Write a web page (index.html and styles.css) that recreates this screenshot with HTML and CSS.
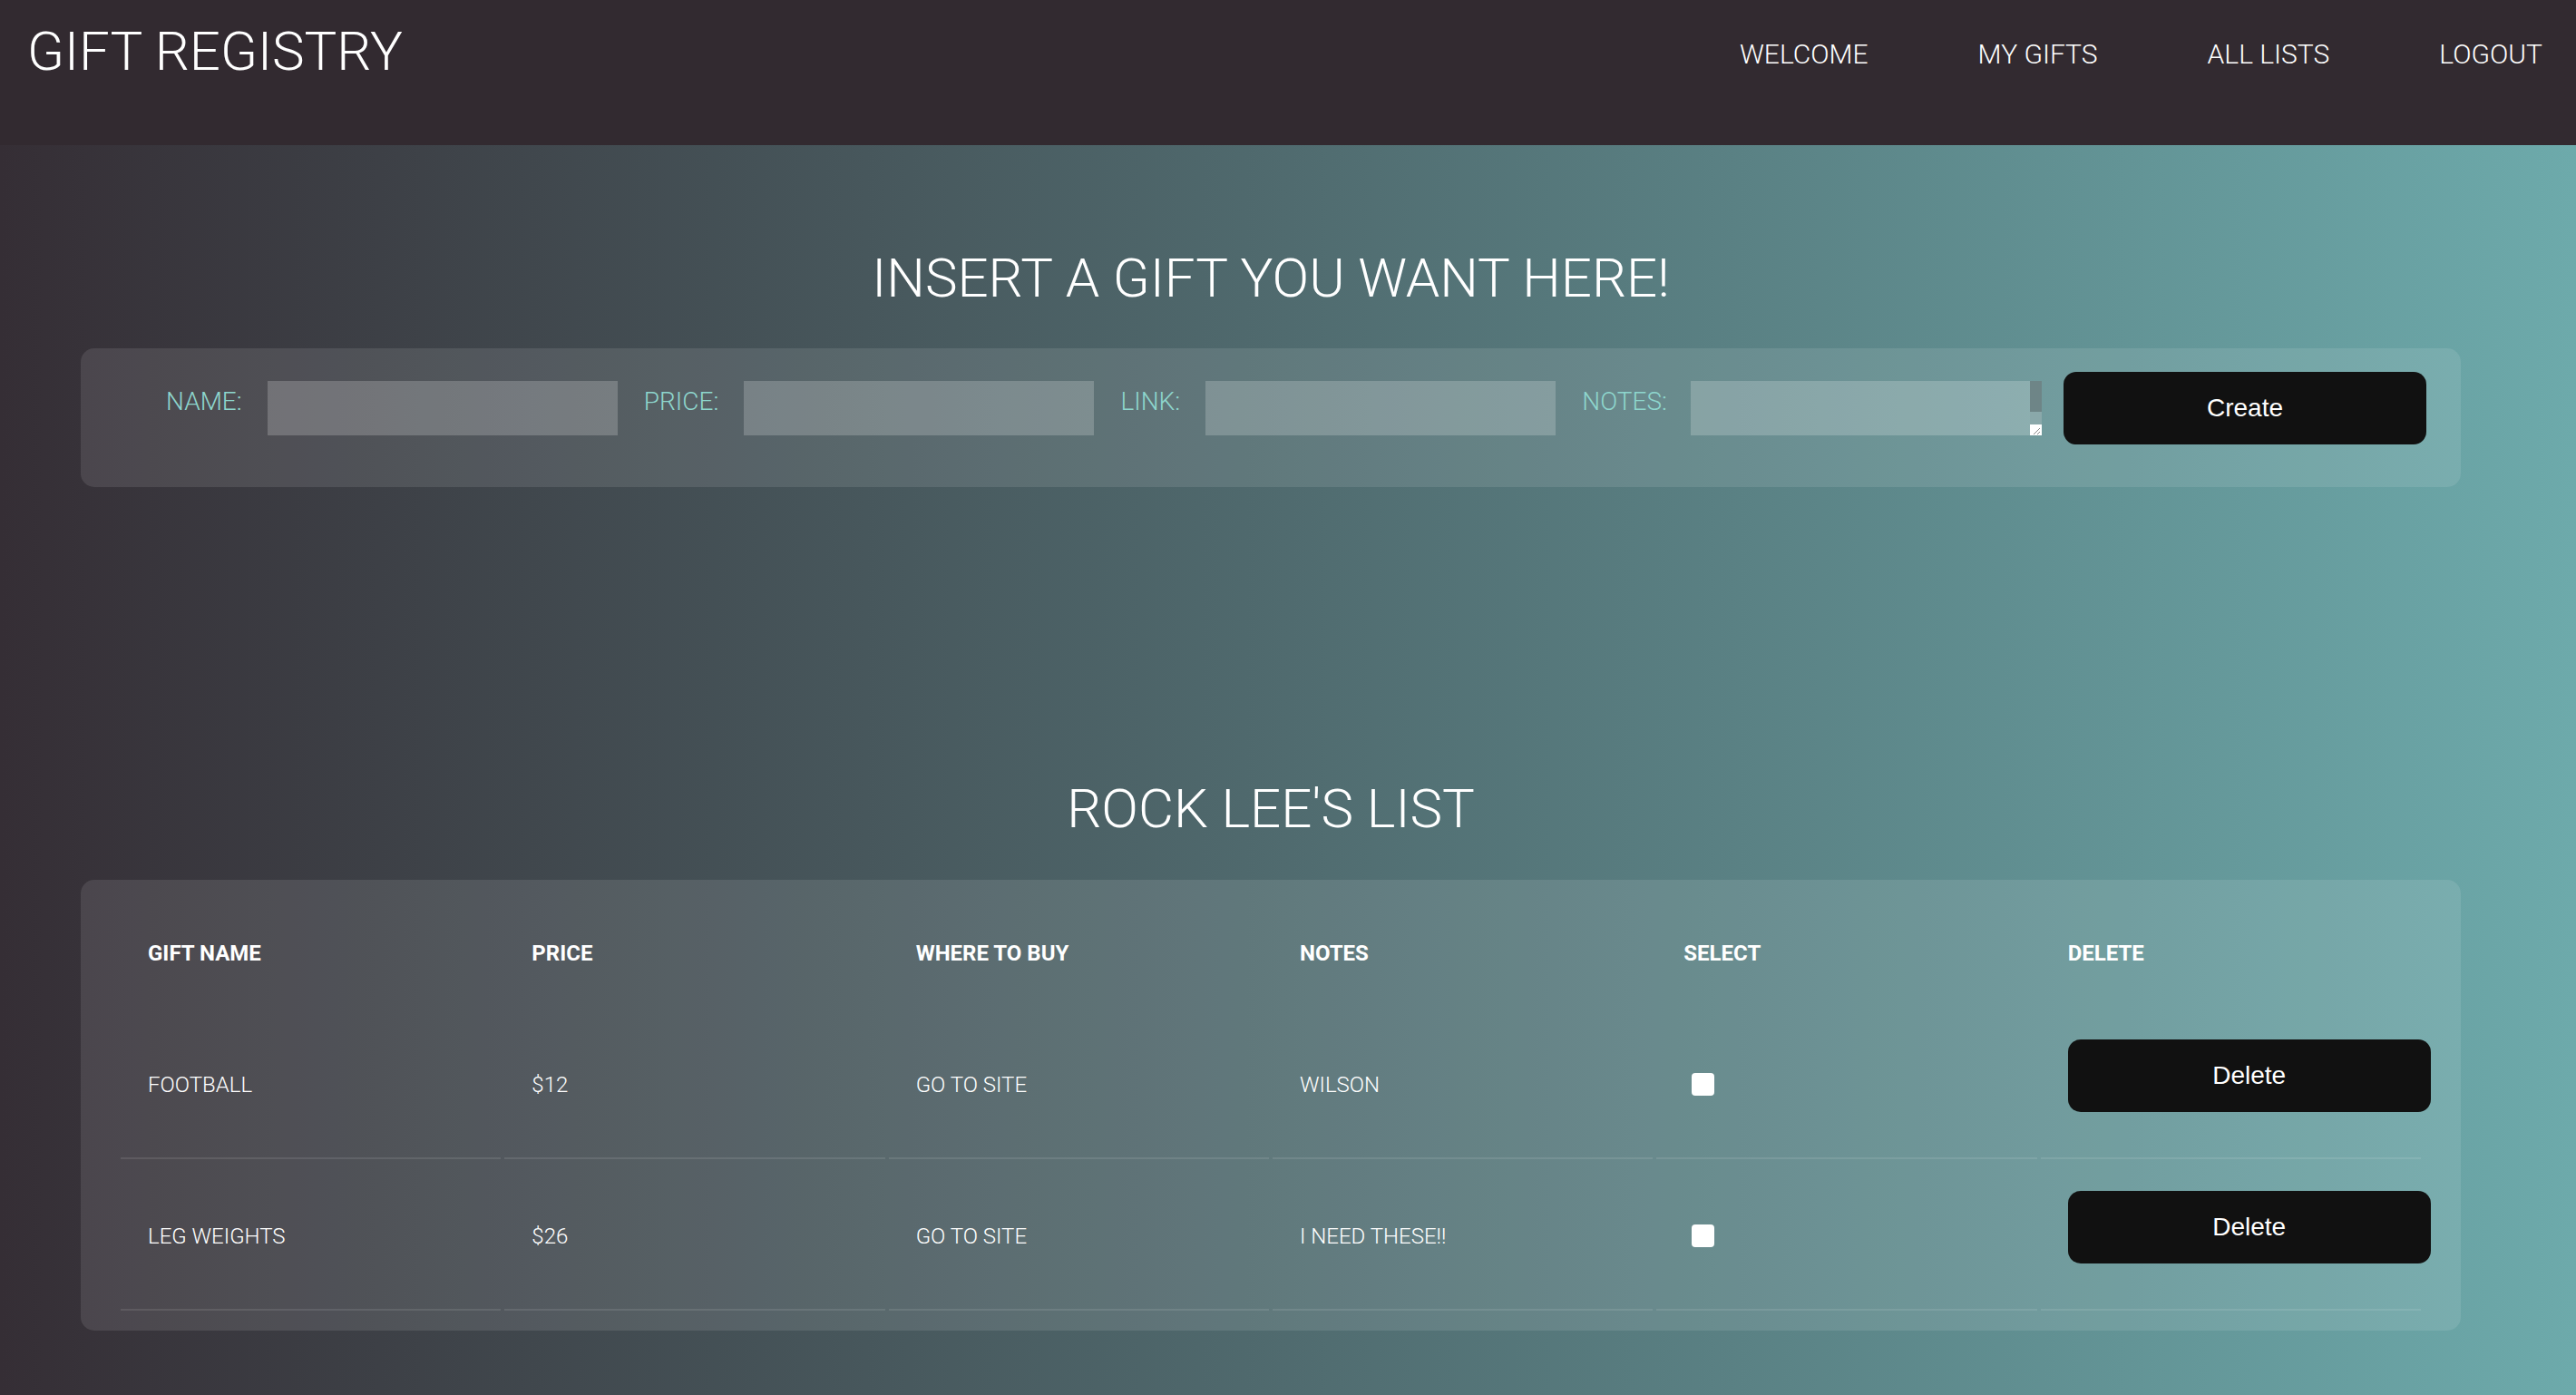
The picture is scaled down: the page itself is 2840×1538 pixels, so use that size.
FILE: index.html
```html
<!DOCTYPE html>
<html lang="en">
<head>
<meta charset="utf-8">
<title>Gift Registry</title>
<link rel="stylesheet" href="styles.css">
</head>
<body>
<header class="topbar">
  <h1 class="brand">GIFT REGISTRY</h1>
  <nav class="nav">
    <a class="nav-link" href="#">WELCOME</a>
    <a class="nav-link" href="#">MY GIFTS</a>
    <a class="nav-link" href="#">ALL LISTS</a>
    <a class="nav-link" href="#">LOGOUT</a>
  </nav>
</header>
<main class="content">
  <h2 class="section-title first">INSERT A GIFT YOU WANT HERE!</h2>
  <form class="card gift-form">
    <label class="field-label" for="name">NAME:</label>
    <input class="field" id="name" type="text">
    <label class="field-label" for="price">PRICE:</label>
    <input class="field" id="price" type="text">
    <label class="field-label" for="link">LINK:</label>
    <input class="field" id="link" type="text">
    <label class="field-label notes-label" for="notes">NOTES:</label>
    <div class="notes-box">
      <textarea class="notes-area" id="notes"></textarea>
      <div class="fake-scroll">
        <div class="fake-thumb"></div>
        <div class="fake-track"></div>
        <div class="fake-resizer">
          <svg width="12" height="12" viewBox="0 0 12 12"><path d="M4 11 L11 4 M8 11 L11 8" stroke="#888" stroke-width="1" fill="none"/></svg>
        </div>
      </div>
    </div>
    <button class="btn create-btn" type="button">Create</button>
  </form>

  <h2 class="section-title second">ROCK LEE'S LIST</h2>
  <div class="card list-card">
    <table class="gift-table">
      <thead>
        <tr>
          <th>GIFT NAME</th>
          <th>PRICE</th>
          <th>WHERE TO BUY</th>
          <th>NOTES</th>
          <th>SELECT</th>
          <th>DELETE</th>
        </tr>
      </thead>
      <tbody>
        <tr>
          <td>FOOTBALL</td>
          <td>$12</td>
          <td><a class="site-link" href="#">GO TO SITE</a></td>
          <td>WILSON</td>
          <td><input class="select-box" type="checkbox"></td>
          <td><button class="btn delete-btn" type="button">Delete</button></td>
        </tr>
        <tr>
          <td>LEG WEIGHTS</td>
          <td>$26</td>
          <td><a class="site-link" href="#">GO TO SITE</a></td>
          <td>I NEED THESE!!</td>
          <td><input class="select-box" type="checkbox"></td>
          <td><button class="btn delete-btn" type="button">Delete</button></td>
        </tr>
      </tbody>
    </table>
  </div>
</main>
</body>
</html>
```
FILE: styles.css
```css
* { box-sizing: border-box; }

html, body {
  margin: 0;
  padding: 0;
}

body {
  min-height: 100vh;
  font-family: Roboto, "Liberation Sans", sans-serif;
  color: #ffffff;
  background: linear-gradient(to right, #352e35 0%, #506b6f 50%, #6daaab 100%);
}

.topbar {
  height: 160px;
  background: #322a30;
  display: flex;
  justify-content: space-between;
  align-items: flex-start;
}

.brand {
  margin: 0;
  padding: 20px 0 0 30px;
  font-weight: 300;
  font-size: 60px;
  line-height: 73px;
  color: #ffffff;
}

.nav {
  display: flex;
  gap: 121px;
  padding: 42px 37px 0 0;
}

.nav-link {
  font-weight: 300;
  font-size: 30px;
  line-height: 35px;
  color: #ffffff;
  text-decoration: none;
}

.content {
  padding: 0 127px 70px 89px;
}

.section-title {
  margin: 0;
  text-align: center;
  font-weight: 300;
  font-size: 60px;
  line-height: 73px;
  color: #ffffff;
}

.section-title.first {
  margin: 110px 0 41px;
}

.section-title.second {
  margin: 318px 0 42px;
}

.card {
  background: rgba(255, 255, 255, 0.1);
  border-radius: 15px;
}

.gift-form {
  display: flex;
  align-items: center;
  height: 153px;
  padding: 26px 38px 47px 94px;
}

.field-label {
  align-self: flex-start;
  margin: 16px 28px 0 0;
  font-weight: 300;
  font-size: 28px;
  line-height: 33px;
  color: #8ed6cd;
}

.notes-label {
  margin-right: 26px;
}

.field {
  width: 387px;
  height: 60px;
  margin-right: 29px;
  border: none;
  background: rgba(255, 255, 255, 0.2);
  outline: none;
}

.notes-box {
  display: flex;
  width: 388px;
  height: 60px;
  margin-right: 24px;
}

.notes-area {
  flex: 1;
  height: 60px;
  border: none;
  resize: none;
  background: rgba(255, 255, 255, 0.2);
  outline: none;
}

.fake-scroll {
  width: 13px;
  display: flex;
  flex-direction: column;
  background: rgba(255, 255, 255, 0.2);
}

.fake-thumb {
  height: 34px;
  background: #6e8587;
}

.fake-track {
  flex: 1;
  background: #8aa8aa;
}

.fake-resizer {
  height: 12px;
  background: #ffffff;
  display: flex;
}

.btn {
  border: none;
  background: #111111;
  color: #ffffff;
  font-family: "Liberation Sans", Arial, sans-serif;
  font-size: 28px;
  border-radius: 14px;
  cursor: pointer;
}

.create-btn {
  width: 400px;
  height: 80px;
  flex-shrink: 0;
}

.list-card {
  padding: 17px 40px 18px;
}

.gift-table {
  width: 100%;
  table-layout: fixed;
  border-spacing: 4px;
}

.gift-table th {
  height: 120px;
  padding: 0 0 0 30px;
  text-align: left;
  vertical-align: middle;
  font-weight: 700;
  font-size: 24px;
  line-height: 28px;
  color: #ffffff;
}

.gift-table td {
  height: 163px;
  padding: 0 0 0 30px;
  vertical-align: middle;
  border-bottom: 2px solid rgba(255, 255, 255, 0.1);
  font-weight: 300;
  font-size: 24px;
  line-height: 28px;
  color: #ffffff;
}

.site-link {
  color: #ffffff;
  text-decoration: none;
}

.select-box {
  display: block;
  appearance: none;
  -webkit-appearance: none;
  width: 25px;
  height: 25px;
  margin: 0 0 0 9px;
  background: #ffffff;
  border: none;
  border-radius: 4px;
}

.delete-btn {
  display: block;
  width: 400px;
  height: 80px;
  margin-bottom: 20px;
}
```
